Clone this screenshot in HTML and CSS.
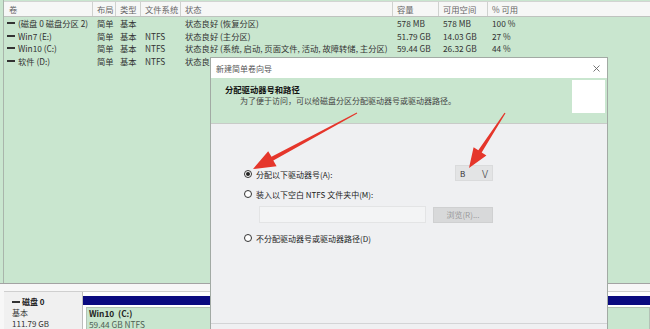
FILE: index.html
```html
<!DOCTYPE html>
<html>
    <head>
        <meta charset="utf-8">
        <title>磁盘管理 - 新建简单卷向导</title>
        <link rel="stylesheet" href="styles.css">
    </head>
    <body>
        <div class="console">
            <section class="volumes">
                <div class="vol-row vol-head">
                    <span>卷</span>
                    <span>布局</span>
                    <span>类型</span>
                    <span>文件系统</span>
                    <span>状态</span>
                    <span>容量</span>
                    <span>可用空间</span>
                    <span>% 可用</span>
                </div>
                <div class="vol-row">
                    <span class="vol-name"><i class="dash"></i>(磁盘 0 磁盘分区 2)</span>
                    <span>简单</span>
                    <span>基本</span>
                    <span></span>
                    <span>状态良好 (恢复分区)</span>
                    <span>578 MB</span>
                    <span>578 MB</span>
                    <span>100 %</span>
                </div>
                <div class="vol-row">
                    <span class="vol-name"><i class="dash"></i>Win7 (E:)</span>
                    <span>简单</span>
                    <span>基本</span>
                    <span>NTFS</span>
                    <span>状态良好 (主分区)</span>
                    <span>51.79 GB</span>
                    <span>14.03 GB</span>
                    <span>27 %</span>
                </div>
                <div class="vol-row">
                    <span class="vol-name"><i class="dash"></i>Win10 (C:)</span>
                    <span>简单</span>
                    <span>基本</span>
                    <span>NTFS</span>
                    <span>状态良好 (系统, 启动, 页面文件, 活动, 故障转储, 主分区)</span>
                    <span>59.44 GB</span>
                    <span>26.32 GB</span>
                    <span>44 %</span>
                </div>
                <div class="vol-row">
                    <span class="vol-name"><i class="dash"></i>软件 (D:)</span>
                    <span>简单</span>
                    <span>基本</span>
                    <span>NTFS</span>
                    <span>状态良好 (主分区)</span>
                    <span>52.00 GB</span>
                    <span>30.11 GB</span>
                    <span>58 %</span>
                </div>
            </section>

            <section class="disks">
                <div class="disk">
                    <div class="disk-info">
                        <b class="disk-name"><i class="dash"></i>磁盘 0</b>
                        <span>基本</span>
                        <span>111.79 GB</span>
                    </div>
                    <div class="disk-map">
                        <div class="disk-bar"></div>
                        <div class="partition">
                            <b>Win10&nbsp; (C:)</b>
                            <span>59.44 GB NTFS</span>
                        </div>
                    </div>
                </div>
            </section>
        </div>

        <!-- wizard window floats over the console -->
        <div class="wizard">
            <div class="wizard-title">
                <span>新建简单卷向导</span>
                <svg class="close" width="7" height="7" viewBox="0 0 7 7">
                    <path d="M0.5 0.5 L6.5 6.5 M6.5 0.5 L0.5 6.5" stroke="#666" stroke-width="0.9" fill="none"/>
                </svg>
            </div>
            <div class="wizard-head">
                <div class="head-text">
                    <b>分配驱动器号和路径</b>
                    <span>为了便于访问，可以给磁盘分区分配驱动器号或驱动器路径。</span>
                </div>
                <div class="head-icon"></div>
            </div>
            <div class="wizard-body">
                <div class="choice-row first">
                    <label class="choice"><i class="radio checked"></i>分配以下驱动器号(A):</label>
                    <div class="drive"><span>B</span><span class="chev">V</span></div>
                </div>
                <div class="choice-row second">
                    <label class="choice"><i class="radio"></i>装入以下空白 NTFS 文件夹中(M):</label>
                </div>
                <div class="choice-row path-row">
                    <div class="path-input"></div>
                    <div class="browse">浏览(R)...</div>
                </div>
                <div class="choice-row last">
                    <label class="choice"><i class="radio"></i>不分配驱动器号或驱动器路径(D)</label>
                </div>
            </div>
            <div class="wizard-foot"></div>
        </div>

        <svg class="marks" width="650" height="329" viewBox="0 0 650 329">
            <polygon points="356.8,112.6 271.5,156.8 268.2,151.2 253,169 276.6,166.2 273.3,160.4 357.2,113.4" fill="#e5362b"/>
            <polygon points="504.5,112.7 478.3,150.2 473.6,147.2 469,168 486.4,155.4 481.7,152.4 505.5,113.3" fill="#e5362b"/>
        </svg>
    </body>
</html>
```

FILE: styles.css
```css
body {
    margin: 0;
    width: 650px;
    height: 329px;
    overflow: hidden;
    position: relative;
    background: #c9e6cf;
    font-family: "Noto Sans CJK SC", "Liberation Sans", sans-serif;
    font-size: 8px;
    color: #333;
}

.console {
    display: flex;
    flex-direction: column;
    height: 100%;
}

/* volume list */
.volumes {
    flex: none;
    height: 283px;
    margin-left: 3px;
    border-left: 1px solid #a9b5ab;
    box-sizing: border-box;
    font-size: 8.3px;
}
.vol-row {
    display: grid;
    grid-template-columns: 88px 23px 25px 40px 212px 46px 49px 1fr;
    height: 12.5px;
    line-height: 12.5px;
    white-space: nowrap;
}
.vol-row span {
    padding-left: 5px;
    overflow: hidden;
}
.vol-head {
    height: 14px;
    line-height: 14px;
    margin-top: 1px;
    border-top: 1px solid #d2d4d2;
    border-bottom: 1px solid #bfc3bf;
    background: #f6f7f6;
    color: #666;
}
.vol-head span + span {
    border-left: 1px solid #cfd2cf;
    padding-left: 4px;
}
.vol-row .vol-name {
    padding-left: 3px;
    display: flex;
    align-items: center;
}
.dash {
    display: inline-block;
    width: 8px;
    height: 2px;
    background: #333;
    margin-right: 3px;
}

/* graphical disk view */
.disks {
    flex: 1;
    overflow: hidden;
    border-top: 1px solid #a3a3a3;
    background: #f7f7f7;
    padding: 7px 0 0 4px;
}
.disk {
    display: flex;
    height: 38px;
    border-top: 1px solid #cfcfcf;
}
.disk-info {
    width: 79px;
    padding: 4px 0 0 8px;
    box-sizing: border-box;
    border-right: 1px solid #bdbdbd;
    background: #f0f0f0;
    display: flex;
    flex-direction: column;
    line-height: 11px;
}
.disk-name {
    display: flex;
    align-items: center;
    color: #222;
}
.disk-name .dash {
    margin-right: 2px;
}
.disk-map {
    flex: 1;
    background: #fff;
    padding-top: 4px;
}
.disk-bar {
    height: 9px;
    background: #0a0a80;
}
.partition {
    margin: 2px 0 0 3px;
    height: 22px;
    padding-left: 2px;
    background: #c9e6cf;
    border: 1px solid #b3c2b6;
    border-bottom: none;
    display: flex;
    flex-direction: column;
    line-height: 11px;
    font-size: 8.3px;
}
.partition b {
    color: #222;
}
.partition span {
    color: #4d5e52;
}

/* wizard dialog */
.wizard {
    position: absolute;
    left: 210px;
    top: 57px;
    width: 396px;
    height: 271px;
    border: 1px solid #a2aaa4;
    border-bottom: none;
    background: #eff0f2;
    display: flex;
    flex-direction: column;
}
.wizard-title {
    height: 20px;
    flex: none;
    background: #fff;
    display: flex;
    align-items: center;
    justify-content: space-between;
    padding: 0 7px 0 5px;
    color: #555;
}
.wizard-head {
    height: 46px;
    flex: none;
    background: #c9e6cf;
    border-bottom: 1px solid #c8cbc8;
    display: flex;
    justify-content: space-between;
    padding: 2px 2px 0 14px;
    box-sizing: border-box;
}
.head-text {
    display: flex;
    flex-direction: column;
    padding-top: 4px;
    line-height: 11px;
}
.head-text b {
    color: #111;
    font-size: 8.3px;
}
.head-text span {
    padding-left: 15px;
    color: #444;
}
.head-icon {
    width: 33px;
    height: 33px;
    background: #fff;
}
.wizard-body {
    height: 199px;
    flex: none;
    box-sizing: border-box;
    padding: 41px 0 0 33px;
    display: flex;
    flex-direction: column;
}
.choice-row {
    display: flex;
    align-items: center;
}
.choice-row.first { height: 18px; }
.choice-row.second { height: 14px; margin-top: 4px; }
.choice-row.path-row { height: 17px; margin-top: 5px; }
.choice-row.last { height: 14px; margin-top: 8px; }

.choice {
    width: 211px;
    display: flex;
    align-items: center;
    gap: 4px;
    color: #222;
}
.radio {
    width: 8px;
    height: 8px;
    box-sizing: border-box;
    border: 1px solid #333;
    border-radius: 50%;
    background: #fff;
    display: flex;
    align-items: center;
    justify-content: center;
}
.radio.checked::after {
    content: "";
    width: 4px;
    height: 4px;
    border-radius: 50%;
    background: #222;
}
.drive {
    width: 38px;
    height: 16px;
    align-self: flex-start;
    box-sizing: border-box;
    background: #e3e4e5;
    border: 1px solid #dadbdc;
    display: flex;
    align-items: center;
    justify-content: space-between;
    padding: 0 4px;
    font-size: 8px;
    color: #333;
}
.drive .chev {
    font-size: 11px;
    font-weight: 300;
    color: #444;
}
.path-input {
    width: 167px;
    height: 17px;
    margin-left: 15px;
    box-sizing: border-box;
    background: #f3f4f5;
    border: 1px solid #e3e4e5;
}
.browse {
    width: 60px;
    height: 16px;
    margin-left: 7px;
    background: #d8d9da;
    border: 1px solid #cfd0d1;
    box-sizing: border-box;
    color: #9a9a9a;
    font-size: 8px;
    display: flex;
    align-items: center;
    justify-content: center;
}
.wizard-foot {
    flex: 1;
    border-top: 1px solid #d3d4d6;
}

/* red callout arrows drawn over the shot */
.marks {
    position: absolute;
    left: 0;
    top: 0;
    pointer-events: none;
}
```
